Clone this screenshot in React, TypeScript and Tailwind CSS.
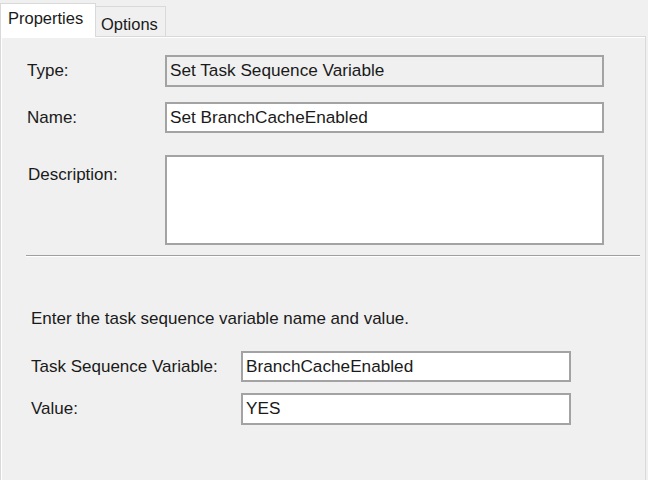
import React from 'react';

const font = { fontFamily: '"Liberation Sans", Arial, sans-serif' };

const Field: React.FC<{ value?: string; readOnly?: boolean; className?: string }> = ({ value = '', readOnly, className = '' }) => (
  <div
    className={`flex items-center border-2 border-[#a3a3a3] pl-[3px] text-[17.2px] leading-none text-[#1a1a1a] ${
      readOnly ? 'bg-[#f0f0f0]' : 'bg-white'
    } ${className}`}
  >
    {value}
  </div>
);

export default function App() {
  return (
    <div className="w-[648px] h-[480px] overflow-hidden bg-[#f0f0f0] text-[#1a1a1a]" style={font}>
      {/* tabs */}
      <div className="flex items-end h-[36px] pt-[2px]">
        <div className="relative z-10 -mb-px flex items-start w-[96px] h-[34px] bg-white border border-b-0 border-[#d9d9d9] pl-[7px] pt-[6px] text-[16.5px] leading-none">
          Properties
        </div>
        <div className="flex items-start w-[70px] h-[30px] border border-b-0 border-l-0 border-[#d9d9d9] pl-[5px] pt-[9px] text-[16.5px] leading-none">
          Options
        </div>
      </div>

      {/* panel */}
      <div className="w-[646px] h-[460px] border border-[#d9d9d9] shadow-[inset_1px_1px_0_#ffffff] pl-[25px] pt-[18px]">
        <div className="flex items-center h-[32px]">
          <span className="ml-[1px] w-[138px] text-[17px]">Type:</span>
          <Field readOnly value="Set Task Sequence Variable" className="w-[439px] h-[32px]" />
        </div>
        <div className="flex items-center h-[31px] mt-[15px]">
          <span className="ml-[1px] w-[138px] text-[17px]">Name:</span>
          <Field value="Set BranchCacheEnabled" className="w-[439px] h-[31px]" />
        </div>
        <div className="flex items-start h-[90px] mt-[22px]">
          <span className="ml-[2px] w-[137px] pt-[7px] text-[17px]">Description:</span>
          <Field className="w-[439px] h-[90px]" />
        </div>
        <div className="mt-[10px] w-[614px] h-[2px] border-t border-b border-t-[#a0a0a0] border-b-white" />

        <div className="ml-[5px] mt-[53px] text-[17px] leading-none">Enter the task sequence variable name and value.</div>

        <div className="flex items-center h-[31px] mt-[24px]">
          <span className="ml-[5px] w-[210px] text-[17px]">Task Sequence Variable:</span>
          <Field value="BranchCacheEnabled" className="w-[330px] h-[31px]" />
        </div>
        <div className="flex items-center h-[32px] mt-[11px]">
          <span className="ml-[5px] w-[210px] text-[17px]">Value:</span>
          <Field value="YES" className="w-[330px] h-[32px]" />
        </div>
      </div>
    </div>
  );
}
